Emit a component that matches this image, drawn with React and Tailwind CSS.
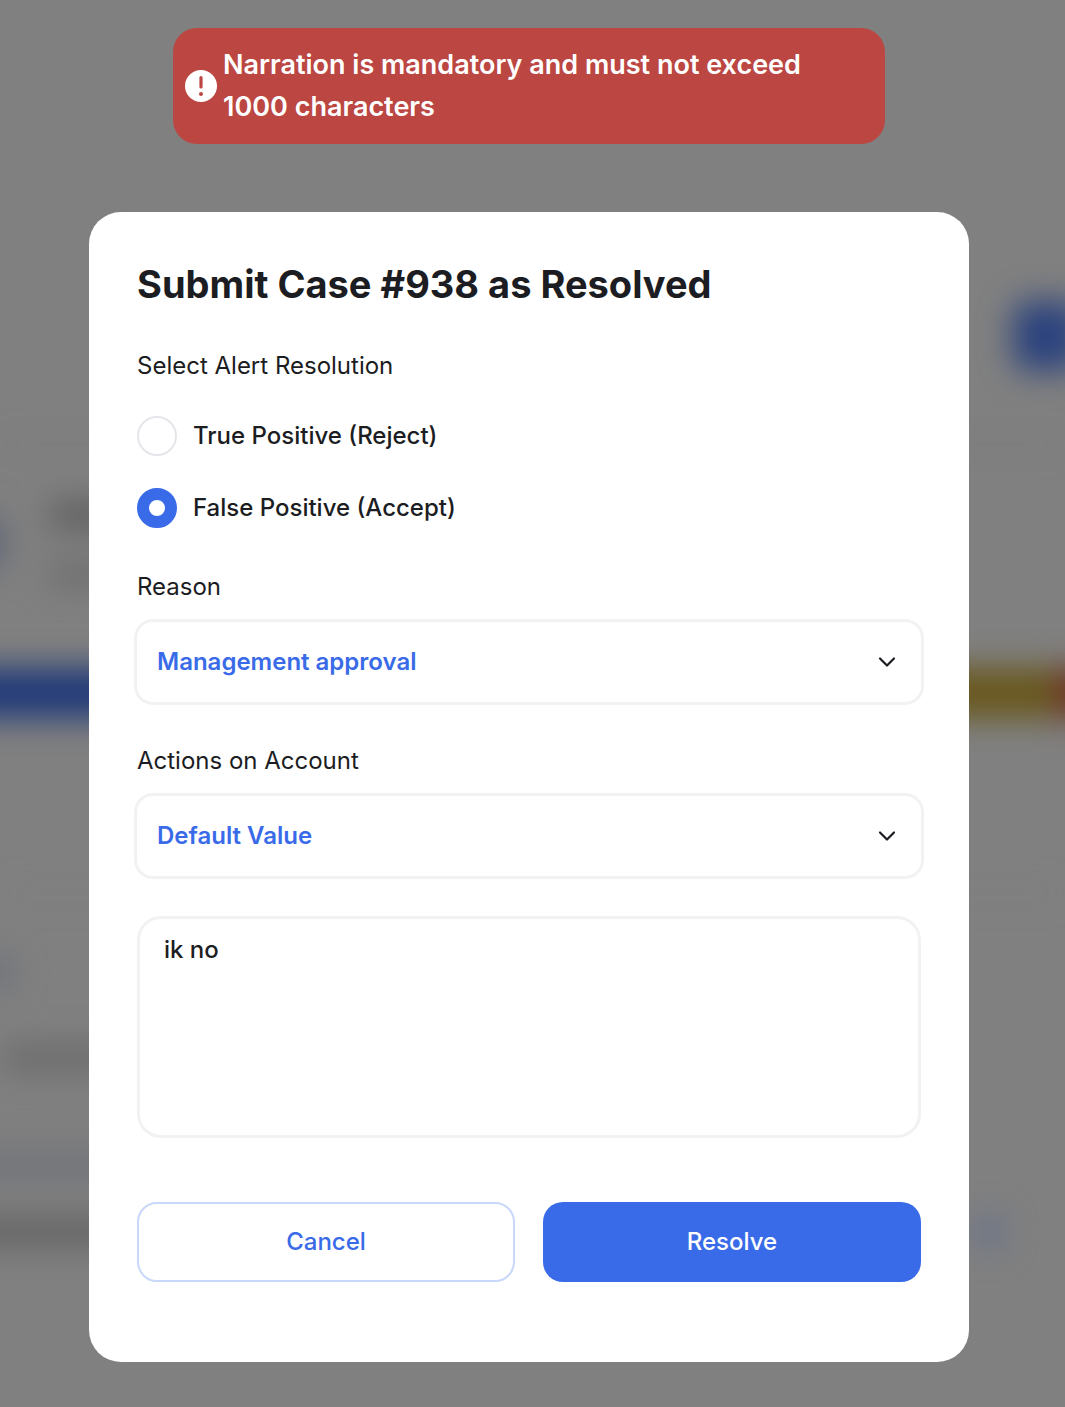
import { useState } from "react";

function Backdrop() {
  return (
    <div aria-hidden="true" className="absolute inset-0 overflow-hidden bg-[#808080]">
      <div className="flex flex-col blur-[16px]">
        <div className="mt-[301px] -mr-4 flex justify-end">
          <div className="h-[70px] w-[68px] rounded-2xl bg-[#2b427d]" />
        </div>
        <div className="mt-[72px] h-[2px] bg-[#66677a]" />
        <div className="mt-[50px] flex h-[96px] items-center gap-[46px]">
          <div className="-ml-10 h-14 w-[44px] rounded-full bg-[#5c6375]" />
          <div className="flex flex-col gap-[36px]">
            <div className="h-[28px] w-[280px] bg-[#5f5f5f]" />
            <div className="h-[20px] w-[220px] bg-[#696969]" />
          </div>
        </div>
        <div className="-mx-10 mt-[77px] flex h-[50px]">
          <div className="w-1/2 bg-[#1f3978]" />
          <div className="grow bg-[#68571c]" />
          <div className="w-[46px] bg-[#6f2f28]" />
        </div>
        <div className="mt-[174px] h-[2px] bg-[#7a7a7a]" />
        <div className="mt-[66px] -ml-4 h-6 w-7 bg-[#646a76]" />
        <div className="mt-[60px] ml-1 h-[28px] w-[160px] bg-[#6b6b6b]" />
        <div className="mt-[80px] -ml-10 h-[26px] w-[280px] bg-[#707278]" />
        <div className="mt-[40px] -ml-10 flex h-[28px] items-center justify-between">
          <div className="h-[28px] w-[280px] bg-[#626263]" />
          <div className="mr-[62px] size-7 rounded-md bg-[#64708c]" />
        </div>
      </div>
    </div>
  );
}

function Toast() {
  return (
    <div
      role="alert"
      className="flex w-full max-w-[712px] items-center gap-1.5 rounded-3xl bg-[#bb4642] py-4 pr-10 pl-3 text-[27px] leading-[42px] font-semibold text-white"
    >
      <svg viewBox="0 0 32 32" className="size-8 shrink-0" aria-hidden="true">
        <circle cx="16" cy="16" r="16" fill="#fff" />
        <path d="M16 7.5v9.5" stroke="#bb4642" strokeWidth="3.2" strokeLinecap="round" />
        <circle cx="16" cy="24" r="2" fill="#bb4642" />
      </svg>
      <p>Narration is mandatory and must not exceed 1000 characters</p>
    </div>
  );
}

function RadioOption({ label, value, selected, onSelect }) {
  return (
    <label className="flex h-10 items-center gap-4 font-medium">
      <input
        type="radio"
        name="resolution"
        value={value}
        checked={selected === value}
        onChange={() => onSelect(value)}
        className="size-10 shrink-0 appearance-none rounded-full border-2 border-[#e5e6ea] bg-white checked:border-12 checked:border-[#396be8]"
      />
      {label}
    </label>
  );
}

function SelectField({ id, label, option, className }) {
  return (
    <div className={className}>
      <label htmlFor={id} className="block leading-8">
        {label}
      </label>
      <div className="relative mt-[19px]">
        <select
          id={id}
          className="block h-20 w-full appearance-none rounded-2xl bg-white px-5 font-semibold text-[#396be8] ring-3 ring-[#f1f2f4]"
        >
          <option>{option}</option>
        </select>
        <svg
          viewBox="0 0 18 12"
          fill="none"
          aria-hidden="true"
          className="pointer-events-none absolute top-[34px] right-[25px] h-3 w-[18px]"
        >
          <path d="M2 2.5l7 7 7-7" stroke="#1c1d22" strokeWidth="2.2" strokeLinecap="round" strokeLinejoin="round" />
        </svg>
      </div>
    </div>
  );
}

export default function App() {
  const [resolution, setResolution] = useState("accept");
  return (
    <div className="relative min-h-screen font-[Inter,sans-serif] text-[#1c1d22]">
      <Backdrop />
      <div className="relative flex flex-col items-center pt-7 pr-[7px] pb-11">
        <Toast />
        <form
          role="dialog"
          aria-labelledby="dialog-title"
          onSubmit={(e) => e.preventDefault()}
          className="mt-17 w-full max-w-[880px] rounded-4xl bg-white px-12 pt-12 pb-20 text-2xl"
        >
          <h1 id="dialog-title" className="text-[38px] leading-12 font-bold">
            Submit Case #938 as Resolved
          </h1>
          <fieldset className="mt-[42px]">
            <legend className="leading-8">Select Alert Resolution</legend>
            <div className="mt-[34px] flex flex-col gap-8">
              <RadioOption label="True Positive (Reject)" value="reject" selected={resolution} onSelect={setResolution} />
              <RadioOption label="False Positive (Accept)" value="accept" selected={resolution} onSelect={setResolution} />
            </div>
          </fieldset>
          <SelectField id="reason" label="Reason" option="Management approval" className="mt-[43px]" />
          <SelectField id="actions" label="Actions on Account" option="Default Value" className="mt-[43px]" />
          <textarea
            aria-label="Narration"
            defaultValue="ik no"
            className="mt-10 block h-[222px] w-full resize-none rounded-3xl border-3 border-[#f1f2f4] bg-white px-6 py-[15px] leading-8 font-medium"
          />
          <div className="mt-16 grid grid-cols-2 gap-7">
            <button type="button" className="h-20 rounded-[20px] border-2 border-[#c8d7fa] bg-white font-medium text-[#396be8]">
              Cancel
            </button>
            <button type="submit" className="h-20 rounded-[20px] bg-[#396be8] font-medium text-white">
              Resolve
            </button>
          </div>
        </form>
      </div>
    </div>
  );
}
